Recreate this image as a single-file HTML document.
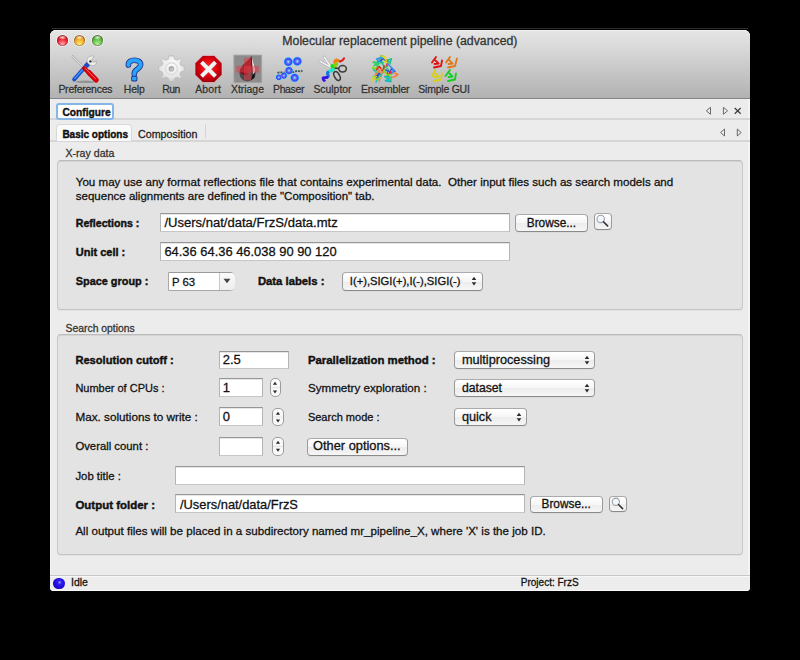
<!DOCTYPE html>
<html><head><meta charset="utf-8"><style>
html,body{margin:0;padding:0;background:#000;width:800px;height:660px;overflow:hidden;}
body{position:relative;font-family:"Liberation Sans",sans-serif;}
.t{position:absolute;white-space:pre;line-height:1;-webkit-text-stroke:0.28px currentColor;}
.r{position:absolute;}
</style></head><body>
<div class="r" style="left:52px;top:28px;width:696px;height:1px;background:#2e2e2e;"></div>
<div class="r" style="left:50px;top:30px;width:700px;height:561px;background:#ececec;border-radius:6px 6px 4px 4px;overflow:hidden;"></div>
<div class="r" style="left:50px;top:30px;width:700px;height:68px;background:linear-gradient(#e6e6e6,#d4d4d4 35%,#b2b2b2);border-radius:6px 6px 0 0;box-shadow:inset 0 1px 0 #f0f0f0;"></div>
<div class="r" style="left:50px;top:98px;width:700px;height:1px;background:#858585;"></div>
<div class="r" style="left:56.6px;top:34.6px;width:11px;height:11px;border-radius:50%;background:radial-gradient(ellipse 38% 22% at 50% 22%, rgba(255,255,255,0.85), rgba(255,255,255,0) 100%),radial-gradient(circle at 50% 85%, #ffb0b8 0, #f0202c 50%, #8a1a20 100%);box-shadow:0 0 0 1px rgba(255,255,255,0.45), inset 0 0 1px 0.5px rgba(60,0,0,0.5);"></div>
<div class="r" style="left:74.1px;top:34.6px;width:11px;height:11px;border-radius:50%;background:radial-gradient(ellipse 38% 22% at 50% 22%, rgba(255,255,255,0.85), rgba(255,255,255,0) 100%),radial-gradient(circle at 50% 85%, #fff080 0, #f4a820 50%, #9a5a10 100%);box-shadow:0 0 0 1px rgba(255,255,255,0.45), inset 0 0 1px 0.5px rgba(60,0,0,0.5);"></div>
<div class="r" style="left:91.6px;top:34.6px;width:11px;height:11px;border-radius:50%;background:radial-gradient(ellipse 38% 22% at 50% 22%, rgba(255,255,255,0.85), rgba(255,255,255,0) 100%),radial-gradient(circle at 50% 85%, #b8f0a0 0, #5cc040 50%, #2a6a1a 100%);box-shadow:0 0 0 1px rgba(255,255,255,0.45), inset 0 0 1px 0.5px rgba(60,0,0,0.5);"></div>
<div class="t" style="left:282.30px;top:35px;font-size:12.3px;color:#333;">Molecular replacement pipeline (advanced)</div>
<div class="t" style="left:58.40px;top:85px;font-size:10.4px;color:#303030;letter-spacing:-0.2px;text-shadow:0 1px 0 #ffffff40;">Preferences</div>
<div class="t" style="left:123.75px;top:85px;font-size:10.4px;color:#303030;letter-spacing:-0.12px;text-shadow:0 1px 0 #ffffff40;">Help</div>
<div class="t" style="left:162.20px;top:85px;font-size:10.4px;color:#303030;letter-spacing:-0.45px;text-shadow:0 1px 0 #ffffff40;">Run</div>
<div class="t" style="left:195.20px;top:85px;font-size:10.4px;color:#303030;letter-spacing:0.2px;text-shadow:0 1px 0 #ffffff40;">Abort</div>
<div class="t" style="left:231.00px;top:85px;font-size:10.4px;color:#303030;text-shadow:0 1px 0 #ffffff40;">Xtriage</div>
<div class="t" style="left:273.00px;top:85px;font-size:10.4px;color:#303030;letter-spacing:-0.3px;text-shadow:0 1px 0 #ffffff40;">Phaser</div>
<div class="t" style="left:313.40px;top:85px;font-size:10.4px;color:#303030;text-shadow:0 1px 0 #ffffff40;">Sculptor</div>
<div class="t" style="left:361.00px;top:85px;font-size:10.4px;color:#303030;letter-spacing:-0.15px;text-shadow:0 1px 0 #ffffff40;">Ensembler</div>
<div class="t" style="left:418.30px;top:85px;font-size:10.4px;color:#303030;letter-spacing:-0.18px;text-shadow:0 1px 0 #ffffff40;">Simple GUI</div>

<svg class="r" style="left:0;top:0" width="800" height="100" viewBox="0 0 800 100">
<defs>
 <radialGradient id="gbody" cx="0.55" cy="0.35" r="0.7"><stop offset="0" stop-color="#fcfcfc"/><stop offset="0.7" stop-color="#e6e6e6"/><stop offset="1" stop-color="#c8c8c8"/></radialGradient>
 <linearGradient id="oct" x1="0" y1="0" x2="0" y2="1"><stop offset="0" stop-color="#ff3a3a"/><stop offset="0.5" stop-color="#e0000a"/><stop offset="1" stop-color="#9a0008"/></linearGradient>
 <radialGradient id="blob" cx="0.5" cy="0.5" r="0.5"><stop offset="0" stop-color="#b0ffff"/><stop offset="0.2" stop-color="#70a0ff"/><stop offset="0.45" stop-color="#5a5af0"/><stop offset="0.7" stop-color="#3048ff"/><stop offset="0.85" stop-color="#28a8ff" stop-opacity="0.85"/><stop offset="1" stop-color="#60e0ff" stop-opacity="0"/></radialGradient>
 <radialGradient id="drop" cx="0.4" cy="0.5" r="0.6"><stop offset="0" stop-color="#b02028"/><stop offset="0.7" stop-color="#700010"/><stop offset="1" stop-color="#301010"/></radialGradient>
</defs>
<!-- Preferences -->
<ellipse cx="85.5" cy="81.8" rx="10" ry="1.2" fill="#707070" opacity="0.55"/>
<path d="M72.6 56.2 L84 67.6" stroke="#a0a0a0" stroke-width="2" stroke-linecap="round"/>
<path d="M72.6 56.2 L84 67.6" stroke="#fbfbfb" stroke-width="1" stroke-linecap="round"/>
<path d="M74.2 79.4 L86.2 65.8" stroke="#1a50c8" stroke-width="4" stroke-linecap="round"/>
<path d="M74.8 78.4 L85.6 66.2" stroke="#3a9cff" stroke-width="1.3" stroke-linecap="round"/>
<path d="M86 66.2 L88.6 63.2" stroke="#1a48c0" stroke-width="4.6" stroke-linecap="butt"/>
<path d="M88.3 63.6 C86.2 61.5 86.8 57.6 89.8 56.4 C91.8 55.6 93.4 56 94.2 56.8 L91.8 59.2 L92.8 61.6 L95 62.2 L96.2 60.8 C96.8 62.6 96.2 64.6 94.4 65.4 C92.4 66.2 90.2 65.6 88.3 63.6 Z" fill="#ececec" stroke="#a8a8a8" stroke-width="0.7"/>
<circle cx="90.4" cy="61.4" r="1.2" fill="#333"/>
<path d="M84.2 68.2 L96.2 80" stroke="#c8000a" stroke-width="4.2" stroke-linecap="round"/>
<path d="M89 72.6 L96.2 80" stroke="#d8000c" stroke-width="5.2" stroke-linecap="round"/>
<path d="M85 68.2 L95.6 78.8" stroke="#ff7078" stroke-width="1" stroke-linecap="round"/>
<!-- Help -->
<path d="M128.4 65 C128.2 61.5 131 60.3 134.5 60.3 C138 60.3 140.6 61.8 140.6 64.6 C140.6 67.4 138 68.6 136.2 70 C134.7 71.1 134.3 72 134.3 74" fill="none" stroke="#20308a" stroke-width="5.6" stroke-linecap="round" stroke-linejoin="round"/>
<rect x="131.2" y="75.9" width="6.2" height="5.6" rx="1.4" fill="#20308a"/>
<path d="M128.4 65 C128.2 61.5 131 60.3 134.5 60.3 C138 60.3 140.6 61.8 140.6 64.6 C140.6 67.4 138 68.6 136.2 70 C134.7 71.1 134.3 72 134.3 74" fill="none" stroke="#2aa4fa" stroke-width="3.9" stroke-linecap="round" stroke-linejoin="round"/>
<rect x="132.1" y="76.8" width="4.4" height="3.8" rx="0.8" fill="#2aa4fa"/>
<!-- Run gear -->
<g transform="translate(171.4 68.7)">
<path d="M-2.4 -12.8 L2.4 -12.8 L3.1 -9.6 L5.8 -8.5 L8.6 -10.3 L10.3 -8.6 L8.5 -5.8 L9.6 -3.1 L12.8 -2.4 L12.8 2.4 L9.6 3.1 L8.5 5.8 L10.3 8.6 L8.6 10.3 L5.8 8.5 L3.1 9.6 L2.4 12.8 L-2.4 12.8 L-3.1 9.6 L-5.8 8.5 L-8.6 10.3 L-10.3 8.6 L-8.5 5.8 L-9.6 3.1 L-12.8 2.4 L-12.8 -2.4 L-9.6 -3.1 L-8.5 -5.8 L-10.3 -8.6 L-8.6 -10.3 L-5.8 -8.5 L-3.1 -9.6 Z" fill="url(#gbody)" stroke="#bcbcbc" stroke-width="0.9" stroke-linejoin="round"/>
<circle r="6" fill="none" stroke="#dedede" stroke-width="1.6"/>
<circle r="2.8" fill="#aaaaaa"/>
<circle cx="0.4" cy="0.6" r="1.6" fill="#c4c4c4"/>
</g>
<!-- Abort -->
<radialGradient id="oct2" cx="0.5" cy="0.45" r="0.6"><stop offset="0" stop-color="#ff3030"/><stop offset="0.55" stop-color="#e0000c"/><stop offset="0.9" stop-color="#9a0010"/><stop offset="1" stop-color="#800010"/></radialGradient>
<path d="M202.8 55.5 L214.2 55.5 L222 63.3 L222 74.7 L214.2 82.5 L202.8 82.5 L195 74.7 L195 63.3 Z" fill="url(#oct2)" stroke="#e8c8c8" stroke-width="0.7"/>
<path d="M201.6 62.2 L215.4 76.2 M215.4 62.2 L201.6 76.2" stroke="#b0b0b0" stroke-width="4.4" stroke-linecap="butt"/>
<path d="M201.6 62.2 L215.4 76.2 M215.4 62.2 L201.6 76.2" stroke="#f4f4f4" stroke-width="3.4" stroke-linecap="butt"/>
<!-- Xtriage -->
<rect x="233.9" y="55.1" width="27.8" height="27.6" fill="#8c8c8c" stroke="#a4a4a4" stroke-width="0.8"/>
<path d="M251.8 56.2 C248 61 239.5 66 239.5 73.2 C239.5 78 243 81.2 247.6 81.2 C252.3 81.2 255.6 77.8 255.6 73 C255.6 67 253 62 251.8 56.2 Z" fill="#4a4a4a"/>
<path d="M251.8 56.2 C248 61 240 66 239.6 72.5 L246 76 L252.5 66 Z" fill="#7a0810"/>
<path d="M251.8 56.5 L247 69 L252 72 Z" fill="#8a0818"/>
<path d="M251.8 56.5 C252.5 61 254.5 65 255.3 70 L253.5 77.5 L252.3 64 Z" fill="#ffffff" opacity="0.95"/>
<path d="M252.5 75 L255 72 L254.5 77.5 L251 80 Z" fill="#111"/>
<rect x="243.9" y="57.7" width="7.2" height="22.7" fill="#d8404a" opacity="0.55"/>
<rect x="236.2" y="65.7" width="22.7" height="6.9" fill="#d8404a" opacity="0.55"/>
<!-- Phaser -->
<path d="M277.5 73 C280 71 283 74 286 72 C289 70 292 73.5 295 71.5 C298 70 300 72.5 302.5 70.5" fill="none" stroke="#2a4a48" stroke-width="1.8" stroke-dasharray="2.2 0.8" opacity="0.85"/>
<circle cx="288.3" cy="61.8" r="5" fill="url(#blob)"/>
<circle cx="297.3" cy="61.3" r="5" fill="url(#blob)"/>
<circle cx="289" cy="70.6" r="4.4" fill="url(#blob)"/>
<circle cx="294.7" cy="77.8" r="4.8" fill="url(#blob)"/>
<circle cx="283.9" cy="75.7" r="3.6" fill="url(#blob)"/>
<circle cx="278.8" cy="77.3" r="3.4" fill="url(#blob)"/>
<!-- Sculptor -->
<path d="M331.5 67.5 L319.5 61.2 M331.5 67.5 L324 56.8" stroke="#b8b8b8" stroke-width="2.6" stroke-linecap="round"/>
<path d="M331 67.2 L319.8 61.2 M331 67.2 L324.3 57.2" stroke="#fafafa" stroke-width="1.2" stroke-linecap="round"/>
<ellipse cx="342.6" cy="68.8" rx="3.8" ry="3.2" fill="none" stroke="#3a3a3a" stroke-width="1.5"/>
<path d="M332 68 L338.8 68.4" stroke="#3a3a3a" stroke-width="1.6"/>
<ellipse cx="337" cy="76" rx="2.6" ry="4.8" transform="rotate(-28 337 76)" fill="none" stroke="#3a3a3a" stroke-width="1.5"/>
<g fill="none" stroke-width="3.2" stroke-linecap="round">
<path d="M344 58.5 C342 61.5 339.5 62 337.8 60.5" stroke="#e01818" stroke-width="2.2"/>
<path d="M337.8 60.5 C335 59.5 334 62.5 336.2 63.8" stroke="#f08010"/>
<path d="M336.2 63.8 C337 65.8 333.5 66.2 332.2 65.8" stroke="#80d010"/>
<path d="M332.2 65.8 C331 67.2 334 68.2 333 69.5" stroke="#10e020"/>
<path d="M333 69.5 C331 71.5 328.5 71.2 327.8 72.5" stroke="#20e0d0"/>
<path d="M327.8 72.5 C326.5 74.5 330 76 327.2 77.2" stroke="#1a70e0"/>
<path d="M327.2 77.2 C325 78.2 322.5 76.8 323 78.8 C323.3 80 324 80.8 324.5 80.5" stroke="#3a10e0" stroke-width="2.6"/>
</g>
<!-- Ensembler -->
<g fill="none" stroke-width="1.5" stroke-linecap="round" stroke-linejoin="round">
<path d="M381 55.5 L381 60 L377 62.5 L377 66" stroke="#f08040"/>
<path d="M392 72 L398 74.5 L394 77 L387 77.5 L385 76" stroke="#f08040"/>
<path d="M374 62 L378 66 L375 70 L377 75 L381 76" stroke="#30d060"/>
<path d="M380 74 L376 78 L373 80" stroke="#f0a030"/>
<path d="M383 72 L379 77 L376 82" stroke="#10c0d0"/>
<path d="M381.8 61.7 L377.8 64.6 L374.1 65.4 L377.8 62.8 L374.1 62.0 L373.0 62.5" stroke="#30d070"/>
<path d="M377.1 69.2 L378.2 69.9 L374.3 70.7 L373.0 68.2" stroke="#10b8c8"/>
<path d="M386.0 61.4 L382.8 58.0 L381.1 60.8 L378.2 61.5 L379.5 60.4" stroke="#2a50e0"/>
<path d="M385.9 60.1 L386.9 60.1 L387.2 62.6 L386.9 66.4" stroke="#f02020"/>
<path d="M382.5 63.5 L384.3 61.2 L385.0 61.4 L388.3 63.5" stroke="#e0d820"/>
<path d="M381.2 76.6 L381.3 73.6 L379.9 77.5 L379.2 81.5" stroke="#f08a40"/>
<path d="M377.4 69.0 L376.0 67.7 L375.9 70.4 L373.0 66.7 L373.0 68.5" stroke="#80e020"/>
<path d="M377.2 72.2 L378.5 76.6 L381.4 74.7 L380.4 76.2 L376.1 75.8" stroke="#20c090"/>
<path d="M379.0 61.1 L376.5 59.2 L378.6 58.3 L382.4 58.2" stroke="#3090f0"/>
<path d="M379.0 66.2 L382.4 69.1 L385.7 67.1 L385.0 65.8 L388.4 70.0" stroke="#30d070"/>
<path d="M378.7 62.2 L380.1 57.8 L383.1 56.0 L381.2 56.0" stroke="#10b8c8"/>
<path d="M385.6 70.0 L389.7 71.7 L389.8 72.7 L391.4 68.7 L395.0 71.3" stroke="#2a50e0"/>
<path d="M391.7 73.4 L390.8 72.4 L390.7 71.5 L387.9 75.9 L387.3 72.4" stroke="#f02020"/>
<path d="M386.8 60.8 L383.7 57.3 L382.4 56.0 L385.8 57.0 L382.7 56.0 L381.3 56.0" stroke="#e0d820"/>
<path d="M378.2 74.3 L378.0 72.6 L374.8 74.8 L377.0 74.6 L378.7 74.8" stroke="#f08a40"/>
<path d="M379.7 76.1 L376.5 76.5 L373.0 76.8 L377.3 80.0 L379.1 77.9" stroke="#80e020"/>
<path d="M382.6 62.0 L382.9 64.5 L381.4 62.0 L384.2 66.4" stroke="#20c090"/>
<path d="M391.3 73.5 L393.5 71.1 L393.7 69.8 L389.4 65.5 L387.4 63.3" stroke="#3090f0"/>
<path d="M388.5 76.2 L391.2 78.2 L389.9 81.5 L386.1 77.9 L385.8 76.5" stroke="#30d070"/>
<path d="M384.7 76.7 L387.8 76.5 L389.1 79.2 L385.4 80.7 L389.1 81.5 L391.3 81.3" stroke="#10b8c8"/>
<path d="M379.2 73.2 L375.5 77.2 L377.5 76.9 L379.7 73.2 L376.6 77.6" stroke="#2a50e0"/>
<path d="M376.5 69.6 L379.3 66.5 L382.2 70.8 L383.6 69.4 L384.0 66.1" stroke="#f02020"/>
<path d="M376.3 76.5 L373.0 78.7 L373.0 81.5 L373.0 81.5 L373.0 78.9 L373.0 81.3" stroke="#e0d820"/>
<path d="M381.9 68.8 L377.9 71.0 L381.5 72.4 L384.3 72.6" stroke="#f08a40"/>
<path d="M390.9 74.8 L391.2 75.0 L386.8 74.5 L384.0 70.0" stroke="#80e020"/>
<path d="M390.4 62.1 L391.5 58.7 L387.5 60.3 L387.8 60.2 L390.3 63.6" stroke="#20c090"/>
</g>
<!-- Simple GUI -->
<g fill="none" stroke-width="1.8" stroke-linecap="round" stroke-linejoin="round">
<g stroke="#e01010"><path d="M436 57 L432 62.5 M435.5 60.5 L438.5 63.5 L434.5 64 M434 67.5 L441 66 L442 60.5"/></g>
<g stroke="#e07818"><path d="M450 57 L446 62.5 M449.5 60.5 L452.5 63.5 L448.5 64 M448 67.5 L455 66 L457 58.5"/></g>
<g stroke="#d8d010"><path d="M435.5 70 L432 76 M435.5 73.5 L438.5 76.5 L434.5 77 M434 81 L441 79.5 L442 73.5"/></g>
<g stroke="#10d020"><path d="M450 70 L445.5 76 M449.5 73.5 L452.5 76.5 L448.5 77 M448 81 L455 79.5 L456 73.5"/></g>
</g>
</svg>

<div class="r" style="left:50px;top:99px;width:1px;height:476px;background:#f5f5f5;"></div>
<div class="r" style="left:748px;top:99px;width:2px;height:476px;background:#f4f4f4;"></div>
<div class="r" style="left:50px;top:118px;width:700px;height:2px;background:#d6d6d6;"></div>
<div class="r" style="left:50px;top:140px;width:700px;height:2px;background:#d6d6d6;"></div>
<div class="r" style="left:56px;top:103px;width:58px;height:17px;background:#fff;border:2px solid #86b6e6;border-radius:3px;box-sizing:border-box;"></div>
<div class="t" style="left:62.50px;top:108px;font-size:10.2px;font-weight:700;-webkit-text-stroke:0.4px currentColor;color:#111;">Configure</div>
<div class="r" style="left:55.5px;top:124px;width:76.0px;height:17px;background:#fafafa;border:1px solid #d8d8d8;border-bottom:none;border-radius:4px 4px 0 0;box-sizing:border-box;"></div>
<div class="t" style="left:62.40px;top:130px;font-size:10.0px;font-weight:700;-webkit-text-stroke:0.4px currentColor;color:#111;">Basic options</div>
<div class="t" style="left:138.00px;top:129px;font-size:10.7px;color:#222;">Composition</div>
<div class="r" style="left:204.5px;top:124px;width:1.0px;height:14px;background:#d4d4d4;"></div>
<svg class="r" style="left:0;top:0" width="800" height="150" viewBox="0 0 800 150">
<g fill="none" stroke="#6a6a6a" stroke-width="1" stroke-linejoin="miter">
<path d="M710.5 107.3 L706.3 110.8 L710.5 114.3 Z"/>
<path d="M723.4 107.3 L727.6 110.8 L723.4 114.3 Z"/>
<path d="M724.5 129 L720.6 132.5 L724.5 136 Z"/>
<path d="M737.3 129 L741.2 132.5 L737.3 136 Z"/>
</g>
<path d="M734.7 108 L740.7 113.8 M740.7 108 L734.7 113.8" stroke="#404040" stroke-width="1.3"/>
</svg>
<div class="r" style="left:57px;top:160px;width:686px;height:150px;background:#e3e3e3;border:1px solid #c8c8c8;border-top-color:#bababa;border-bottom-color:#c4c4c4;border-radius:4px;box-sizing:border-box;box-shadow:inset 0 1px 0 #d4d4d4, 0 1px 0 #e2e2e2;"></div>
<div class="t" style="left:65.50px;top:148px;font-size:10.6px;color:#333;">X-ray data</div>
<div class="r" style="left:57px;top:334px;width:686px;height:221px;background:#e3e3e3;border:1px solid #c8c8c8;border-top-color:#bababa;border-bottom-color:#c4c4c4;border-radius:4px;box-sizing:border-box;box-shadow:inset 0 1px 0 #d4d4d4, 0 1px 0 #e2e2e2;"></div>
<div class="t" style="left:65.50px;top:324px;font-size:10.4px;color:#333;">Search options</div>
<div class="t" style="left:75.75px;top:177px;font-size:11.58px;color:#111;">You may use any format reflections file that contains experimental data.  Other input files such as search models and</div>
<div class="t" style="left:75.75px;top:191px;font-size:11.52px;color:#111;">sequence alignments are defined in the "Composition" tab.</div>
<div class="t" style="left:75.75px;top:218px;font-size:10.6px;font-weight:700;-webkit-text-stroke:0.4px currentColor;color:#111;">Reflections :</div>
<div class="r" style="left:160px;top:213px;width:350px;height:19px;background:#fff;border:1px solid #b4b4b4;border-top-color:#969696;border-bottom-color:#c6c6c6;box-sizing:border-box;box-shadow:inset 0 1px 0 #e6e6e6;"></div>
<div class="t" style="left:164.40px;top:216px;font-size:13.05px;color:#111;">/Users/nat/data/FrzS/data.mtz</div>
<div class="r" style="left:515px;top:213.5px;width:73px;height:18.5px;background:linear-gradient(#ffffff,#f6f6f6 50%,#ececec 51%,#f6f6f6);border:1px solid #9a9a9a;border-top-color:#aaaaaa;border-bottom-color:#8a8a8a;border-radius:4px;box-sizing:border-box;box-shadow:0 1px 0 #d0d0d055;"></div>
<div class="t" style="left:526.75px;top:218px;font-size:11.85px;color:#111;">Browse...</div>
<div class="r" style="left:594.4px;top:213.4px;width:17.399999999999977px;height:17.0px;background:linear-gradient(#ffffff,#f6f6f6 50%,#ececec 51%,#f6f6f6);border:1px solid #9a9a9a;border-top-color:#aaaaaa;border-bottom-color:#8a8a8a;border-radius:4px;box-sizing:border-box;box-shadow:0 1px 0 #d0d0d055;"></div>
<svg class="r" style="left:594.4px;top:213.4px" width="17.399999999999977" height="17.0" viewBox="0 0 17 17"><circle cx="6.5" cy="5.9" r="3.7" fill="#f2f8fc" stroke="#9aa0a8" stroke-width="1.1"/><path d="M9.2 8.7 L13.4 12.9" stroke="#333" stroke-width="1.6" stroke-linecap="round"/></svg>
<div class="t" style="left:75.75px;top:247px;font-size:11px;font-weight:700;-webkit-text-stroke:0.4px currentColor;color:#111;">Unit cell :</div>
<div class="r" style="left:160px;top:241.5px;width:350px;height:19.0px;background:#fff;border:1px solid #b4b4b4;border-top-color:#969696;border-bottom-color:#c6c6c6;box-sizing:border-box;box-shadow:inset 0 1px 0 #e6e6e6;"></div>
<div class="t" style="left:164.40px;top:246px;font-size:12.92px;color:#111;">64.36 64.36 46.038 90 90 120</div>
<div class="t" style="left:75.75px;top:276px;font-size:10.9px;font-weight:700;-webkit-text-stroke:0.4px currentColor;color:#111;">Space group :</div>
<div class="r" style="left:168px;top:272px;width:66.5px;height:18.5px;background:#fff;border:1px solid #a8a8a8;border-top-color:#9a9a9a;border-radius:1px 5px 5px 1px;box-sizing:border-box;"></div>
<div class="r" style="left:219px;top:273px;width:14.5px;height:16.5px;background:linear-gradient(#fafafa,#eeeeee);border-left:1px solid #c8c8c8;border-radius:0 4px 4px 0;"></div>
<svg class="r" style="left:223px;top:278px" width="8" height="6" viewBox="0 0 8 6"><path d="M0.5 0.8 L7.5 0.8 L4 5.2Z" fill="#444"/></svg>
<div class="t" style="left:172.00px;top:277px;font-size:11.3px;color:#111;">P 63</div>
<div class="t" style="left:257.90px;top:276px;font-size:11.3px;font-weight:700;-webkit-text-stroke:0.4px currentColor;color:#111;">Data labels :</div>
<div class="r" style="left:342.4px;top:272px;width:140.60000000000002px;height:18.5px;background:linear-gradient(#ffffff,#f6f6f6 50%,#ececec 51%,#f6f6f6);border:1px solid #9a9a9a;border-top-color:#aaaaaa;border-bottom-color:#8a8a8a;border-radius:4px;box-sizing:border-box;box-shadow:0 1px 0 #d0d0d055;"></div>
<div class="t" style="left:349.80px;top:276px;font-size:11.2px;color:#111;">I(+),SIGI(+),I(-),SIGI(-)</div>
<svg class="r" style="left:471px;top:275.3px" width="6" height="12" viewBox="0 0 6 12"><path d="M0.7 5 L3 1.7 L5.3 5Z M0.7 7.2 L3 10.5 L5.3 7.2Z" fill="#2a2a2a"/></svg>
<div class="t" style="left:75.40px;top:355px;font-size:11.14px;font-weight:700;-webkit-text-stroke:0.4px currentColor;color:#111;">Resolution cutoff :</div>
<div class="t" style="left:75.40px;top:383px;font-size:10.99px;color:#111;">Number of CPUs :</div>
<div class="t" style="left:75.40px;top:411px;font-size:11.72px;color:#111;">Max. solutions to write :</div>
<div class="t" style="left:75.40px;top:441px;font-size:11.32px;color:#111;">Overall count :</div>
<div class="t" style="left:75.40px;top:471px;font-size:11.37px;color:#111;">Job title :</div>
<div class="t" style="left:75.40px;top:500px;font-size:11.47px;font-weight:700;-webkit-text-stroke:0.4px currentColor;color:#111;">Output folder :</div>
<div class="t" style="left:75.40px;top:525px;font-size:11.6px;color:#111;">All output files will be placed in a subdirectory named mr_pipeline_X, where 'X' is the job ID.</div>
<div class="r" style="left:219px;top:350.5px;width:69.5px;height:18.5px;background:#fff;border:1px solid #b4b4b4;border-top-color:#969696;border-bottom-color:#c6c6c6;box-sizing:border-box;box-shadow:inset 0 1px 0 #e6e6e6;"></div>
<div class="t" style="left:222.70px;top:353px;font-size:13px;color:#111;">2.5</div>
<div class="r" style="left:219px;top:378.2px;width:43.69999999999999px;height:19.100000000000023px;background:#fff;border:1px solid #b4b4b4;border-top-color:#969696;border-bottom-color:#c6c6c6;box-sizing:border-box;box-shadow:inset 0 1px 0 #e6e6e6;"></div>
<div class="r" style="left:269.5px;top:378px;width:11.199999999999989px;height:19.19999999999999px;background:linear-gradient(#fdfdfd,#f6f6f6 45%,#e6e6e6 50%,#f6f6f6 56%,#fbfbfb);border:1px solid #9c9c9c;border-radius:5px;box-sizing:border-box;"></div>
<svg class="r" style="left:272.1px;top:378px" width="6" height="19.19999999999999" viewBox="0 0 6 19.19999999999999"><path d="M0.9 6.8 L3 3.8 L5.1 6.8Z M0.9 12.399999999999988 L3 15.49999999999999 L5.1 12.399999999999988Z" fill="#2a2a2a"/></svg>
<div class="t" style="left:222.70px;top:381px;font-size:13px;color:#111;">1</div>
<div class="r" style="left:219px;top:407.3px;width:43.69999999999999px;height:18.5px;background:#fff;border:1px solid #b4b4b4;border-top-color:#969696;border-bottom-color:#c6c6c6;box-sizing:border-box;box-shadow:inset 0 1px 0 #e6e6e6;"></div>
<div class="r" style="left:272.2px;top:407.5px;width:11.400000000000034px;height:18.30000000000001px;background:linear-gradient(#fdfdfd,#f6f6f6 45%,#e6e6e6 50%,#f6f6f6 56%,#fbfbfb);border:1px solid #9c9c9c;border-radius:5px;box-sizing:border-box;"></div>
<svg class="r" style="left:274.9px;top:407.5px" width="6" height="18.30000000000001" viewBox="0 0 6 18.30000000000001"><path d="M0.9 6.8 L3 3.8 L5.1 6.8Z M0.9 11.50000000000001 L3 14.600000000000012 L5.1 11.50000000000001Z" fill="#2a2a2a"/></svg>
<div class="t" style="left:222.70px;top:410px;font-size:13px;color:#111;">0</div>
<div class="r" style="left:219px;top:437px;width:43.69999999999999px;height:18.5px;background:#fff;border:1px solid #b4b4b4;border-top-color:#969696;border-bottom-color:#c6c6c6;box-sizing:border-box;box-shadow:inset 0 1px 0 #e6e6e6;"></div>
<div class="r" style="left:272.2px;top:437px;width:11.400000000000034px;height:18.5px;background:linear-gradient(#fdfdfd,#f6f6f6 45%,#e6e6e6 50%,#f6f6f6 56%,#fbfbfb);border:1px solid #9c9c9c;border-radius:5px;box-sizing:border-box;"></div>
<svg class="r" style="left:274.9px;top:437px" width="6" height="18.5" viewBox="0 0 6 18.5"><path d="M0.9 6.8 L3 3.8 L5.1 6.8Z M0.9 11.7 L3 14.8 L5.1 11.7Z" fill="#2a2a2a"/></svg>
<div class="t" style="left:307.90px;top:355px;font-size:11.38px;font-weight:700;-webkit-text-stroke:0.4px currentColor;color:#111;">Parallelization method :</div>
<div class="t" style="left:307.90px;top:382px;font-size:11.64px;color:#111;">Symmetry exploration :</div>
<div class="t" style="left:307.90px;top:412px;font-size:11.03px;color:#111;">Search mode :</div>
<div class="r" style="left:454.4px;top:351px;width:140.30000000000007px;height:18.100000000000023px;background:linear-gradient(#ffffff,#f6f6f6 50%,#ececec 51%,#f6f6f6);border:1px solid #9a9a9a;border-top-color:#aaaaaa;border-bottom-color:#8a8a8a;border-radius:4px;box-sizing:border-box;box-shadow:0 1px 0 #d0d0d055;"></div>
<div class="t" style="left:461.90px;top:354px;font-size:12.7px;color:#111;">multiprocessing</div>
<svg class="r" style="left:583.5px;top:354px" width="6" height="12" viewBox="0 0 6 12"><path d="M0.7 5 L3 1.7 L5.3 5Z M0.7 7.2 L3 10.5 L5.3 7.2Z" fill="#2a2a2a"/></svg>
<div class="r" style="left:454.4px;top:379.3px;width:140.30000000000007px;height:18.099999999999966px;background:linear-gradient(#ffffff,#f6f6f6 50%,#ececec 51%,#f6f6f6);border:1px solid #9a9a9a;border-top-color:#aaaaaa;border-bottom-color:#8a8a8a;border-radius:4px;box-sizing:border-box;box-shadow:0 1px 0 #d0d0d055;"></div>
<div class="t" style="left:461.90px;top:382px;font-size:12.24px;color:#111;">dataset</div>
<svg class="r" style="left:583.5px;top:382.3px" width="6" height="12" viewBox="0 0 6 12"><path d="M0.7 5 L3 1.7 L5.3 5Z M0.7 7.2 L3 10.5 L5.3 7.2Z" fill="#2a2a2a"/></svg>
<div class="r" style="left:454.4px;top:408px;width:72.30000000000007px;height:18px;background:linear-gradient(#ffffff,#f6f6f6 50%,#ececec 51%,#f6f6f6);border:1px solid #9a9a9a;border-top-color:#aaaaaa;border-bottom-color:#8a8a8a;border-radius:4px;box-sizing:border-box;box-shadow:0 1px 0 #d0d0d055;"></div>
<div class="t" style="left:461.90px;top:411px;font-size:12.7px;color:#111;">quick</div>
<svg class="r" style="left:515.5px;top:411px" width="6" height="12" viewBox="0 0 6 12"><path d="M0.7 5 L3 1.7 L5.3 5Z M0.7 7.2 L3 10.5 L5.3 7.2Z" fill="#2a2a2a"/></svg>
<div class="r" style="left:306.9px;top:438px;width:100.70000000000005px;height:18px;background:linear-gradient(#ffffff,#f6f6f6 50%,#ececec 51%,#f6f6f6);border:1px solid #9a9a9a;border-top-color:#aaaaaa;border-bottom-color:#8a8a8a;border-radius:4px;box-sizing:border-box;box-shadow:0 1px 0 #d0d0d055;"></div>
<div class="t" style="left:313.10px;top:440px;font-size:12.8px;color:#111;">Other options...</div>
<div class="r" style="left:174.6px;top:466.4px;width:350.4px;height:18.200000000000045px;background:#fff;border:1px solid #b4b4b4;border-top-color:#969696;border-bottom-color:#c6c6c6;box-sizing:border-box;box-shadow:inset 0 1px 0 #e6e6e6;"></div>
<div class="r" style="left:174.6px;top:494.3px;width:350.4px;height:18.599999999999966px;background:#fff;border:1px solid #b4b4b4;border-top-color:#969696;border-bottom-color:#c6c6c6;box-sizing:border-box;box-shadow:inset 0 1px 0 #e6e6e6;"></div>
<div class="t" style="left:180.00px;top:499px;font-size:12.87px;color:#111;">/Users/nat/data/FrzS</div>
<div class="r" style="left:529.5px;top:495.5px;width:73.5px;height:17.5px;background:linear-gradient(#ffffff,#f6f6f6 50%,#ececec 51%,#f6f6f6);border:1px solid #9a9a9a;border-top-color:#aaaaaa;border-bottom-color:#8a8a8a;border-radius:4px;box-sizing:border-box;box-shadow:0 1px 0 #d0d0d055;"></div>
<div class="t" style="left:541.50px;top:499px;font-size:11.85px;color:#111;">Browse...</div>
<div class="r" style="left:609.2px;top:495.6px;width:17.59999999999991px;height:16.600000000000023px;background:linear-gradient(#ffffff,#f6f6f6 50%,#ececec 51%,#f6f6f6);border:1px solid #9a9a9a;border-top-color:#aaaaaa;border-bottom-color:#8a8a8a;border-radius:4px;box-sizing:border-box;box-shadow:0 1px 0 #d0d0d055;"></div>
<svg class="r" style="left:609.2px;top:495.6px" width="17.59999999999991" height="16.600000000000023" viewBox="0 0 17 17"><circle cx="6.5" cy="5.9" r="3.7" fill="#f2f8fc" stroke="#9aa0a8" stroke-width="1.1"/><path d="M9.2 8.7 L13.4 12.9" stroke="#333" stroke-width="1.6" stroke-linecap="round"/></svg>
<div class="r" style="left:50px;top:575px;width:700px;height:1px;background:#c8c8c8;"></div>
<div class="r" style="left:50px;top:576px;width:700px;height:15px;background:#ededed;border-radius:0 0 4px 4px;box-shadow:inset 0 1px 0 #f8f8f8, inset 0 -1px 0 #fafafa;"></div>
<div class="r" style="left:53px;top:577.75px;width:11.5px;height:11.5px;border-radius:50%;background:radial-gradient(circle at 55% 40%,#90b0ff 0,#3020f0 20%,#2208d8 55%,#16068a 100%);"></div>
<div class="t" style="left:71.00px;top:577px;font-size:10.5px;color:#111;">Idle</div>
<div class="t" style="left:520.80px;top:578px;font-size:10px;color:#111;">Project: FrzS</div>
</body></html>
